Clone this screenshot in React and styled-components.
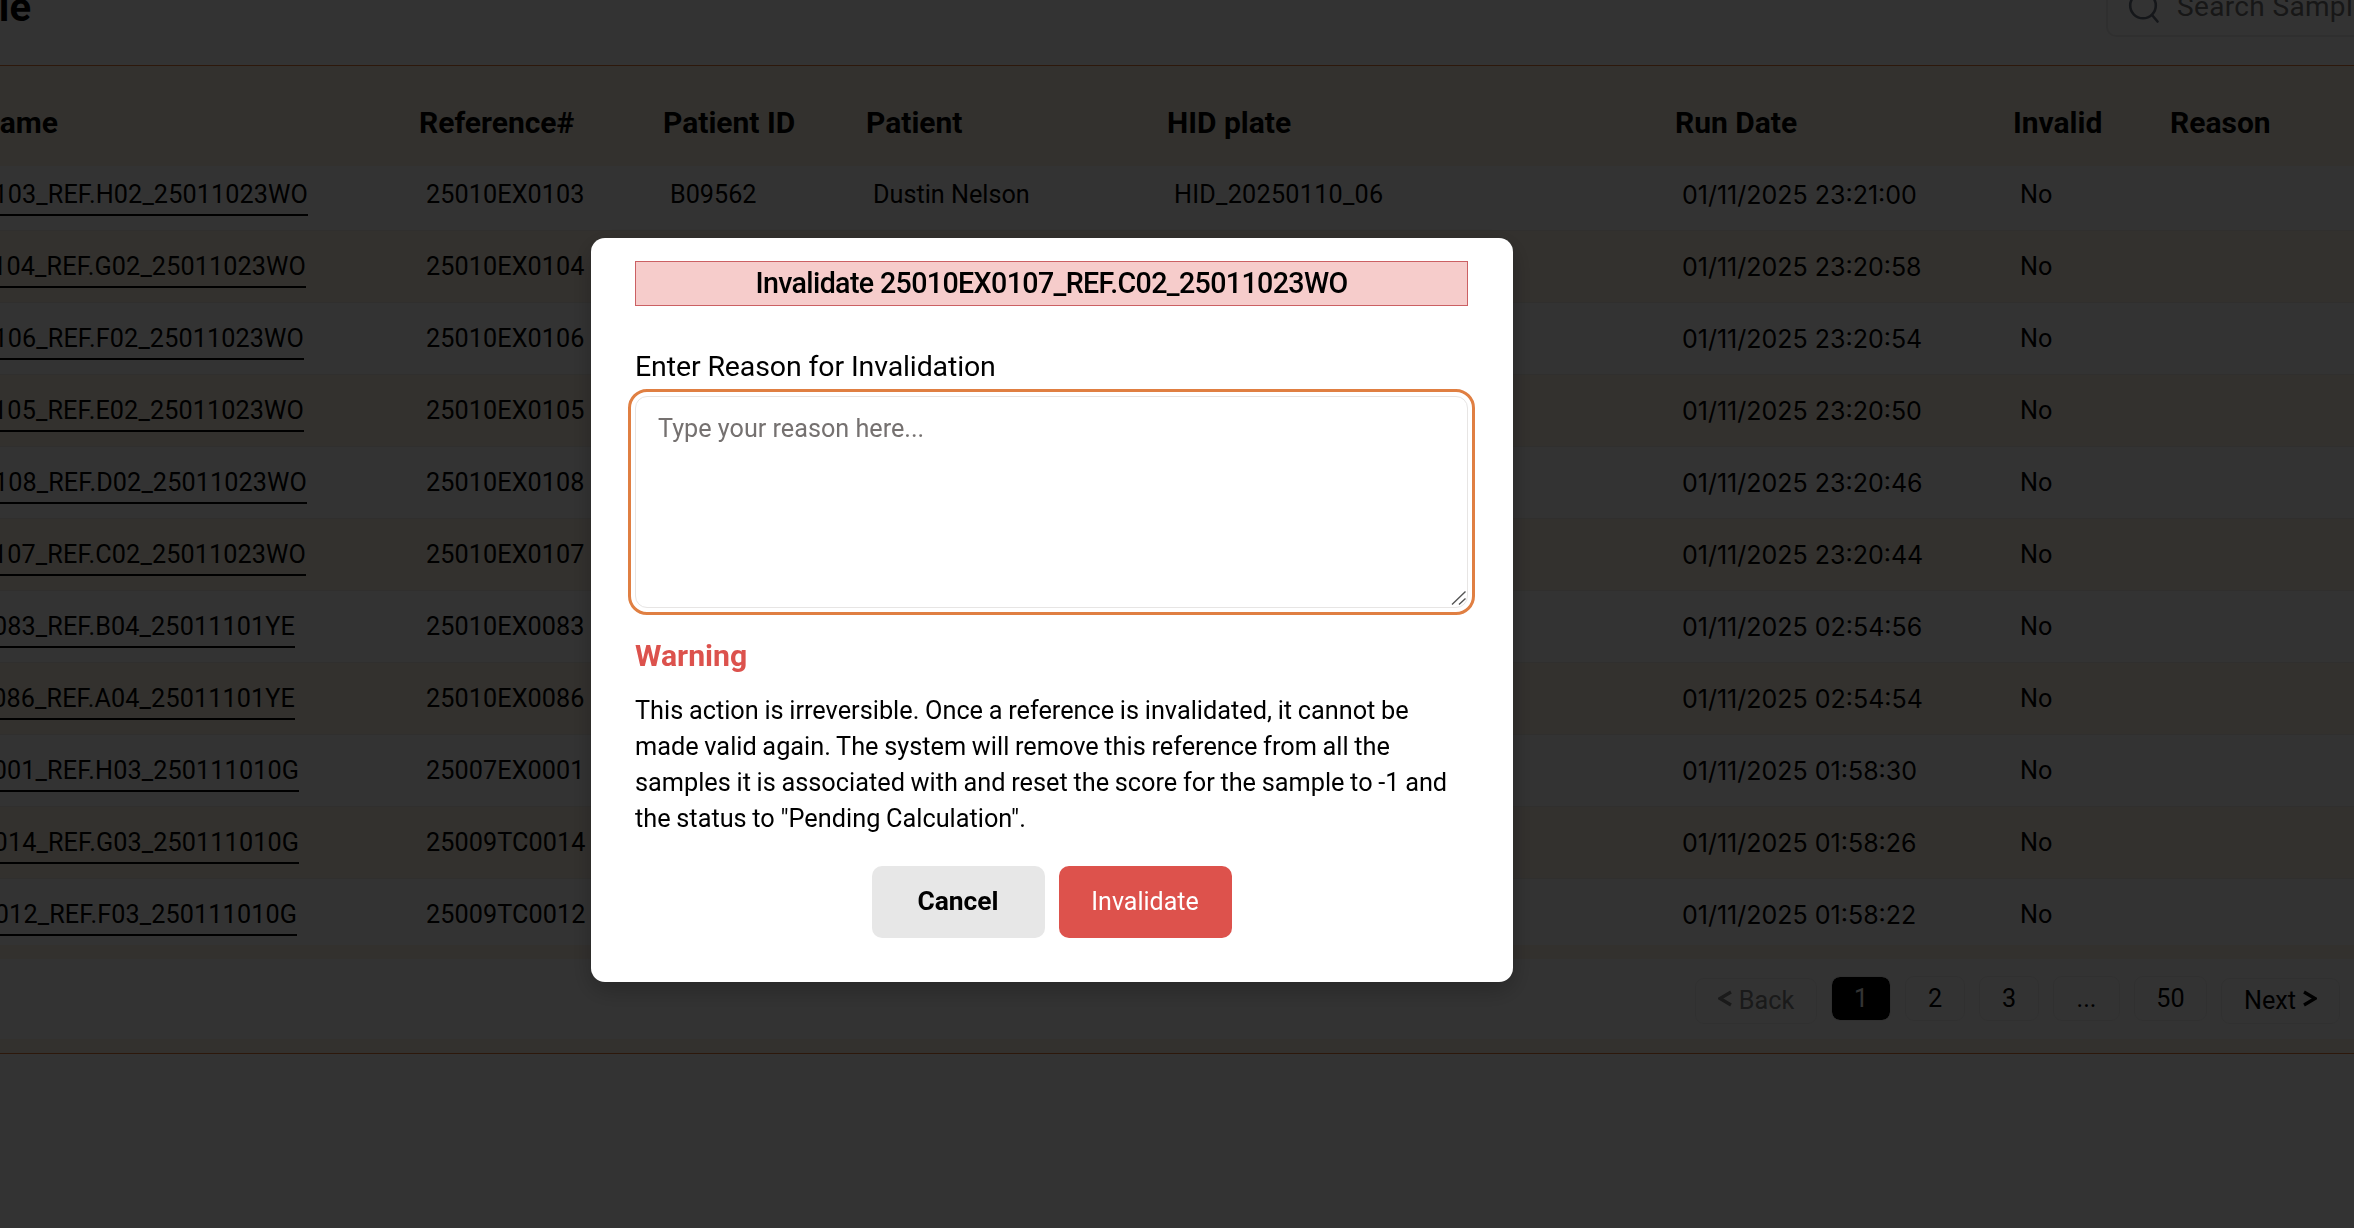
import React from 'react';
import styled, { createGlobalStyle } from 'styled-components';

const Global = createGlobalStyle`
  *, *::before, *::after { box-sizing: border-box; }
  body { margin: 0; background: #fff; font-family: Roboto, "Liberation Sans", sans-serif; color: #000; overflow: hidden; }
`;
const Page = styled.div`
  height: 1228px; width: 2354px; overflow: hidden; background: #fff;
`;
const TopBar = styled.header`
  height: 65px; display: flex; justify-content: space-between; align-items: flex-end;
`;
const Title = styled.h1`
  margin: 0 0 37px; width: 31px; display: flex; justify-content: flex-end; white-space: nowrap;
  font-size: 40px; line-height: 40px; font-weight: 700;
`;
const SearchBox = styled.div`
  width: 340px; height: 62px; flex: none; margin: 0 -92px 28px 0; padding: 0 0 0 20px;
  display: flex; align-items: center; gap: 17px; border: 2px solid #ebebeb; border-radius: 10px;
  color: #757575; font-size: 28px; letter-spacing: 0.35px; white-space: nowrap;
`;
const SearchIcon = styled.svg`
  width: 32px; height: 34px; flex: none; fill: none; stroke: #6b7280; stroke-width: 2.6; stroke-linecap: round;
`;
const Panel = styled.section`
  height: 989px; border-top: 1px solid #e07b39; border-bottom: 1px solid #e07b39; background: #fdf5e6;
`;
const Columns = styled.div`
  display: grid;
  grid-template-columns: 567px 244px 203px 301px 508px 338px 157px 300px;
`;
const HeadRow = styled(Columns)`
  height: 100px; margin-left: -148px; padding-top: 39px; font-size: 30px; line-height: 36px; font-weight: 700;
`;
const Row = styled(Columns)`
  height: 72px; margin-left: -148px; padding-top: 16px; font-size: 25.2px; line-height: 40px;
  background: ${p => (p.$alt ? '#fdf5e6' : '#fff')};
  border-bottom: 1px solid #f0ece6;
  &:nth-child(2) { height: 65px; padding-top: 9px; }
  &:nth-child(12) { height: 66px; border-bottom: 0; }
`;
const Cell = styled.div`
  padding-left: 7px; white-space: nowrap;
`;
const PlateCell = styled(Cell)`
  letter-spacing: 0.25px;
`;
const ReferenceCell = styled(Cell)`
  letter-spacing: 0.1px;
`;
const DateCell = styled(Cell)`
  font-family: Inter, sans-serif; font-size: 25px;
`;
const NameCell = styled(Cell)`
  padding: 0; display: flex; justify-content: flex-end;
`;
const Name = styled.a`
  height: 41px; border-bottom: 2px solid #000; margin-right: ${p => p.$right}px; letter-spacing: 0.12px;
`;
const HeadName = styled.div`
  text-align: right; padding-right: 361px;
`;
const Footer = styled.div`
  height: 80px; margin-top: 14px; padding: 0 0 2px 1695px; display: flex; align-items: center; gap: 14px; background: #fff;
`;
const Pager = styled.button`
  flex: none; width: ${p => p.$w}px; height: ${p => p.$h || 45}px; padding: 0; margin-top: ${p => (p.$h ? 5 : 0)}px;
  display: flex; align-items: center; justify-content: center; gap: 7px;
  border: 1px solid #f0f0f0; border-radius: 9px;
  background: ${p => (p.$active ? '#000' : '#fff')}; background-clip: padding-box;
  color: ${p => (p.$active ? '#fff' : p.$muted ? '#808080' : '#000')};
  font: 25.2px Roboto, sans-serif;
`;
const Chevron = styled.svg`
  width: 14px; height: 17px; margin-top: -4px; fill: none; stroke: currentColor; stroke-width: 3.2;
`;
const Overlay = styled.div`
  position: fixed; inset: 0; background: rgba(0, 0, 0, 0.8);
  padding: 238px 0 0 591px;
`;
const Dialog = styled.div`
  width: 922px; height: 744px; padding: 23px 45px 0 44px; border-radius: 14px; background: #fff;
  box-shadow: 0 8px 24px rgba(0, 0, 0, 0.25);
`;
const DialogTitle = styled.h2`
  margin: 0; height: 45px; border: 1px solid #cb6063; background: #f6cccb;
  text-align: center; font-size: 28.6px; line-height: 43px; font-weight: 500; letter-spacing: -0.63px;
`;
const Label = styled.label`
  display: block; margin-top: 43px; font-size: 28.5px; line-height: 36px; letter-spacing: -0.12px;
`;
const ReasonField = styled.div`
  position: relative; margin-top: 11px;
`;
const Reason = styled.textarea`
  display: block; width: 833px; height: 212px; margin: 0; padding: 15px 22px; resize: none;
  border: 1px solid #e7e5e4; border-radius: 12px; outline: 3px solid #e07f42; outline-offset: 4px;
  font: 25.2px/34px Roboto, sans-serif; background: #fff; overflow: hidden;
  &::placeholder { color: #757170; opacity: 1; }
`;
const Grip = styled.svg`
  position: absolute; right: 1px; bottom: 2px; width: 16px; height: 16px; pointer-events: none;
  fill: none; stroke: #555; stroke-width: 1.4;
`;
const Warning = styled.h3`
  margin: 30px 0 0; font-size: 30.2px; line-height: 36px; font-weight: 700; color: #dc524d;
`;
const Message = styled.p`
  margin: 19px 0 0; font-size: 25.3px; line-height: 36px; word-spacing: -0.6px; white-space: nowrap;
`;
const Actions = styled.div`
  margin-top: 29px; display: flex; justify-content: center; gap: 14px;
`;
const Action = styled.button`
  width: 173px; height: 72px; padding: 0 0 2px; border: 0; border-radius: 10px;
  background: ${p => (p.$danger ? '#dd524c' : '#e7e7e7')};
  color: ${p => (p.$danger ? '#fff' : '#000')};
  font: ${p => (p.$danger ? '400 25px' : '700 26.4px')} Roboto, sans-serif;
`;

const rows = [
  ['25010EX0103_REF.H02_25011023WO', 111, '25010EX0103', 'B09562', 'Dustin Nelson', 'HID_20250110_06', '01/11/2025 23:21:00'],
  ['25010EX0104_REF.G02_25011023WO', 113, '25010EX0104', '', '', '', '01/11/2025 23:20:58'],
  ['25010EX0106_REF.F02_25011023WO', 115, '25010EX0106', '', '', '', '01/11/2025 23:20:54'],
  ['25010EX0105_REF.E02_25011023WO', 115, '25010EX0105', '', '', '', '01/11/2025 23:20:50'],
  ['25010EX0108_REF.D02_25011023WO', 112, '25010EX0108', '', '', '', '01/11/2025 23:20:46'],
  ['25010EX0107_REF.C02_25011023WO', 113, '25010EX0107', '', '', '', '01/11/2025 23:20:44'],
  ['25010EX0083_REF.B04_25011101YE', 124, '25010EX0083', '', '', '', '01/11/2025 02:54:56'],
  ['25010EX0086_REF.A04_25011101YE', 124, '25010EX0086', '', '', '', '01/11/2025 02:54:54'],
  ['25007EX0001_REF.H03_250111010G', 120, '25007EX0001', '', '', '', '01/11/2025 01:58:30'],
  ['25009TC0014_REF.G03_250111010G', 120, '25009TC0014', '', '', '', '01/11/2025 01:58:26'],
  ['25009TC0012_REF.F03_250111010G', 122, '25009TC0012', '', '', '', '01/11/2025 01:58:22'],
];

export default function App() {
  return (
    <>
      <Global />
      <Page>
        <TopBar>
          <Title>Reference Table</Title>
          <SearchBox>
            <SearchIcon viewBox="0 0 32 34">
              <circle cx="15" cy="16.5" r="12.8" />
              <path d="M24 26l5.5 6.5" />
            </SearchIcon>
            Search Sample
          </SearchBox>
        </TopBar>
        <Panel>
          <HeadRow>
            <HeadName>Name</HeadName>
            <div>Reference#</div>
            <div>Patient ID</div>
            <div>Patient</div>
            <div>HID plate</div>
            <div>Run Date</div>
            <div>Invalid</div>
            <div>Reason</div>
          </HeadRow>
          {rows.map(([name, right, ref, pid, patient, plate, date], i) => (
            <Row key={ref} $alt={i % 2 === 1}>
              <NameCell><Name $right={right}>{name}</Name></NameCell>
              <ReferenceCell>{ref}</ReferenceCell>
              <Cell>{pid}</Cell>
              <Cell>{patient}</Cell>
              <PlateCell>{plate}</PlateCell>
              <DateCell>{date}</DateCell>
              <Cell>No</Cell>
              <Cell />
            </Row>
          ))}
          <Footer>
            <Pager $w={122} $h={46} $muted>
              <Chevron viewBox="0 0 14 17"><path d="M13 2L2 8.5L13 15" /></Chevron>Back
            </Pager>
            <Pager $w={60} $active>1</Pager>
            <Pager $w={60}>2</Pager>
            <Pager $w={60}>3</Pager>
            <Pager $w={67}>...</Pager>
            <Pager $w={73}>50</Pager>
            <Pager $w={119} $h={46}>
              Next<Chevron viewBox="0 0 14 17"><path d="M1 2L12 8.5L1 15" /></Chevron>
            </Pager>
          </Footer>
        </Panel>
      </Page>
      <Overlay>
        <Dialog>
          <DialogTitle>Invalidate 25010EX0107_REF.C02_25011023WO</DialogTitle>
          <Label htmlFor="reason">Enter Reason for Invalidation</Label>
          <ReasonField>
            <Reason id="reason" placeholder="Type your reason here..." />
            <Grip viewBox="0 0 16 16"><path d="M1 14.5L14.5 1.5M8 14.5L14.5 8.5" /></Grip>
          </ReasonField>
          <Warning>Warning</Warning>
          <Message>
            This action is irreversible. Once a reference is invalidated, it cannot be<br />
            made valid again. The system will remove this reference from all the<br />
            samples it is associated with and reset the score for the sample to -1 and<br />
            the status to "Pending Calculation".
          </Message>
          <Actions>
            <Action>Cancel</Action>
            <Action $danger>Invalidate</Action>
          </Actions>
        </Dialog>
      </Overlay>
    </>
  );
}
